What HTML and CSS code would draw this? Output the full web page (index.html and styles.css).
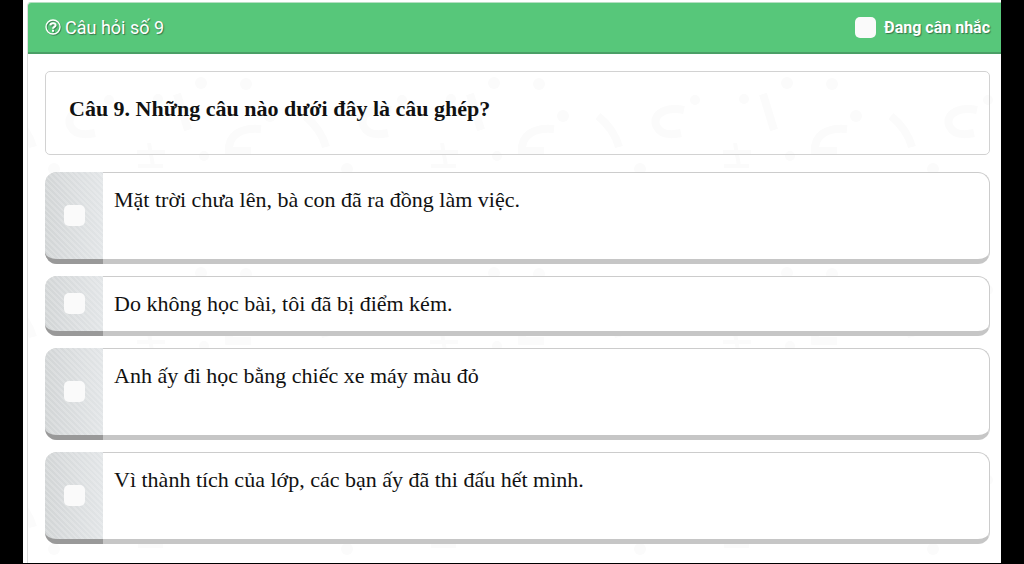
FILE: index.html
```
<!DOCTYPE html>
<html lang="vi">
<head>
    <meta charset="utf-8">
    <title>Câu hỏi số 9</title>
    <link rel="stylesheet" href="styles.css">
</head>
<body>
<main class="page">
    <form class="panel">
        <svg class="doodles" aria-hidden="true">
            <defs>
                <pattern id="doodle" x="34" y="0" width="293" height="190" patternUnits="userSpaceOnUse">
                    <g fill="none" stroke="#fbfbfb" stroke-width="8">
                        <path d="M36 56C14 52 3 63 9 73Q14 83 33 79"/>
                        <path d="M115 40L126 76"/>
                        <path d="M199 75C178 73 166 82 167 97H189"/>
                        <path d="M243 62Q259 75 264 93"/>
                        <path d="M75 98H103M87 89L91 112M76 112H101" stroke-width="4"/>
                    </g>
                    <g fill="#fbfbfb">
                        <circle cx="47" cy="46" r="5"/>
                        <circle cx="96" cy="45" r="5"/>
                        <circle cx="139" cy="29" r="6"/>
                        <circle cx="184" cy="30" r="6"/>
                        <circle cx="208" cy="62" r="6"/>
                        <circle cx="142" cy="102" r="5"/>
                        <circle cx="285" cy="115" r="6"/>
                    </g>
                </pattern>
            </defs>
            <rect width="100%" height="100%" fill="url(#doodle)"/>
        </svg>
        <header class="panel-header">
            <h1 class="panel-title">
                <svg class="help-icon" viewBox="0 0 16 16" aria-hidden="true">
                    <circle cx="8" cy="8" r="7" fill="none" stroke="currentColor" stroke-width="1.3"/>
                    <path d="M5.4 6.4C5.5 3.6 10.7 3.6 10.6 6.3C10.6 7.9 8 7.8 8 9.8" fill="none" stroke="currentColor" stroke-width="2"/>
                    <rect x="7" y="10.8" width="2" height="2" fill="currentColor"/>
                </svg>
                Câu hỏi số 9
            </h1>
            <label class="consider">
                <input type="checkbox" class="check">
                Đang cân nhắc
            </label>
        </header>
        <div class="panel-body">
            <h2 class="question">Câu 9. Những câu nào dưới đây là câu ghép?</h2>
            <div class="options">
                <label class="option tall">
                    <span class="option-side"><input type="checkbox" class="check"></span>
                    <span class="option-text">Mặt trời chưa lên, bà con đã ra đồng làm việc.</span>
                </label>
                <label class="option">
                    <span class="option-side"><input type="checkbox" class="check"></span>
                    <span class="option-text">Do không học bài, tôi đã bị điểm kém.</span>
                </label>
                <label class="option tall">
                    <span class="option-side"><input type="checkbox" class="check"></span>
                    <span class="option-text">Anh ấy đi học bằng chiếc xe máy màu đỏ</span>
                </label>
                <label class="option tall">
                    <span class="option-side"><input type="checkbox" class="check"></span>
                    <span class="option-text">Vì thành tích của lớp, các bạn ấy đã thi đấu hết mình.</span>
                </label>
            </div>
        </div>
    </form>
</main>
</body>
</html>
```
FILE: styles.css
```
* {
    box-sizing: border-box;
}

body {
    margin: 0;
    background: #000;
    color: #111;
    font-family: "Liberation Serif", "Times New Roman", serif;
}

.page {
    margin: 0 23px 1px;
    padding: 2px 0 0 4px;
    background: #fff;
}

.panel {
    position: relative;
    border-left: 1px solid #ddd;
    border-top: 1px solid #b5dfc2;
    border-top-left-radius: 4px;
    overflow: hidden;
}

.doodles {
    position: absolute;
    top: 51px;
    left: 0;
    width: 100%;
    height: 100%;
}

.panel-header {
    position: relative;
    display: flex;
    justify-content: space-between;
    align-items: center;
    height: 51px;
    padding: 0 11px 1px 17px;
    background: #57c77a;
    border-bottom: 2px solid #4a9f66;
    color: #fff;
    font-family: Roboto, sans-serif;
    text-shadow: 1px 1px 1px #38754b;
}

.panel-title {
    display: flex;
    align-items: center;
    gap: 4px;
    margin: 0;
    font-size: 18px;
    font-weight: 400;
}

.help-icon {
    width: 16px;
    height: 16px;
    filter: drop-shadow(1px 1px 0 #418858);
}

.consider {
    display: flex;
    align-items: center;
    gap: 8px;
    font-size: 16px;
    font-weight: 700;
}

.check {
    appearance: none;
    width: 21px;
    height: 21px;
    margin: 0;
    border-radius: 5px;
    background: #fafafa;
}

.panel-body {
    position: relative;
    padding: 17px 11px 19px 17px;
}

.question {
    min-height: 84px;
    margin: 0 0 17px;
    padding: 23px;
    border: 1px solid #d2d2d2;
    border-radius: 5px;
    font-size: 22px;
    line-height: 28px;
}

.options {
    display: flex;
    flex-direction: column;
    gap: 12px;
}

.option {
    display: flex;
    min-height: 60px;
    border: 1px solid #ccc;
    border-bottom: 5px solid #c6c6c6;
    border-left: 0;
    border-radius: 12px;
    background: #fff;
}

.tall {
    min-height: 92px;
}

.option-side {
    display: flex;
    flex: none;
    justify-content: center;
    align-items: center;
    width: 58px;
    margin: -1px 0 -5px;
    border-bottom: 5px solid #999;
    border-radius: 12px 0 0 12px;
    background: repeating-linear-gradient(45deg, #ffffff00 0 2px, #ffffff30 2px 4px), linear-gradient(to right, #d2d5d6, #e2e5e7);
}

.option-text {
    padding: 13px 11px;
    font-size: 22px;
    line-height: 28px;
}
```
